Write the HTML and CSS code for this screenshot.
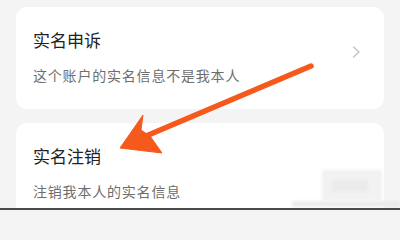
FILE: index.html
```html
<!DOCTYPE html>
<html lang="zh">
<head>
<meta charset="utf-8">
<link rel="stylesheet" href="styles.css">
</head>
<body>
<div class="page">
  <div class="card card-first">
    <div class="row">
      <div class="texts">
        <div class="title">实名申诉</div>
        <div class="sub">这个账户的实名信息不是我本人</div>
      </div>
      <svg class="chev" width="9" height="12" viewBox="0 0 9 12"><path d="M1.5 1 L7 6 L1.5 11" fill="none" stroke="#c4c4c4" stroke-width="1.4" stroke-linecap="round" stroke-linejoin="round"/></svg>
    </div>
  </div>
  <div class="card card-second">
    <div class="title">实名注销</div>
    <div class="sub">注销我本人的实名信息</div>
  </div>
</div>
<div class="mosaic">
  <span class="m1"></span><span class="m2"></span><span class="m3"></span>
</div>
<div class="bottomline"></div>
<svg class="arrow" width="400" height="210" viewBox="0 0 400 210">
  <line x1="311" y1="66" x2="146" y2="136" stroke="#f55a1c" stroke-width="5.5" stroke-linecap="round"/>
  <polygon points="120,148 143,115 141,130 150,136 162,153" fill="#f55a1c" stroke="#f55a1c" stroke-width="1" stroke-linejoin="round"/>
</svg>
</body>
</html>
```

FILE: styles.css
```css
html, body {
  margin: 0;
  padding: 0;
}
html {
  background: #f4f4f4;
}
body {
  width: 400px;
  height: 210px;
  overflow: hidden;
  background: #f4f4f4;
  font-family: "Noto Sans CJK SC", "Noto Sans", sans-serif;
  position: relative;
}
.page {
  padding: 7px 16px 0 16px;
  display: flex;
  flex-direction: column;
  gap: 14px;
}
.card {
  background: #ffffff;
  border-radius: 11px;
  padding: 21px 17px 0 17px;
  box-sizing: border-box;
}
.card-first {
  height: 102px;
}
.card-second {
  height: 100px;
}
.row {
  display: flex;
  align-items: center;
  justify-content: space-between;
}
.chev {
  margin-right: 6px;
  margin-top: -10px;
}
.title {
  font-size: 17px;
  line-height: 24px;
  color: #222222;
}
.sub {
  margin-top: 13px;
  font-size: 14px;
  letter-spacing: 0.8px;
  line-height: 20px;
  color: #6e6e6e;
}
.bottomline {
  position: absolute;
  left: 0;
  right: 0;
  top: 208px;
  height: 2px;
  background: #4a4a4a;
}
.mosaic {
  position: absolute;
  left: 292px;
  top: 160px;
  width: 108px;
  height: 47px;
  filter: blur(1.5px);
}
.mosaic span {
  position: absolute;
  background: #f2f2f2;
}
.mosaic .m1 { left: 30px; top: 10px; width: 60px; height: 30px; }
.mosaic .m2 { left: 40px; top: 20px; width: 36px; height: 12px; background: #ebebeb; }
.mosaic .m3 { left: 0; top: 41px; width: 108px; height: 6px; background: #ececec; }
.arrow {
  position: absolute;
  left: 0;
  top: 0;
}
```
